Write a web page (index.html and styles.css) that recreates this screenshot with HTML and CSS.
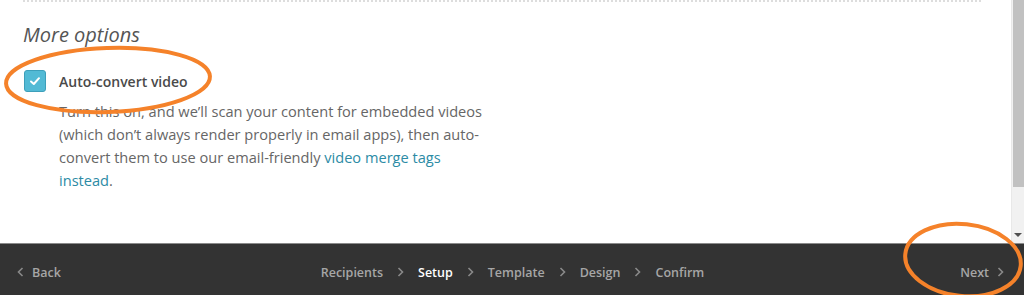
FILE: index.html
```html
<!DOCTYPE html>
<html lang="en">
<head>
  <meta charset="UTF-8">
  <title>Campaign Setup - More options</title>
  <link rel="stylesheet" href="styles.css">
</head>
<body>
  <div class="page">
    <div class="viewport">
      <div class="content">
        <div class="divider"></div>
        <h2 class="section-title">More options</h2>
        <label class="option">
          <span class="checkbox">
            <svg width="14" height="14" viewBox="0 0 14 14"><path d="M3 7.5 L5.8 10 L11 4.2" fill="none" stroke="#fff" stroke-width="2" stroke-linecap="round" stroke-linejoin="round"/></svg>
          </span>
          <span class="option-label">Auto-convert video</span>
        </label>
        <p class="option-help">Turn this on, and we’ll scan your content for embedded videos (which don’t always render properly in email apps), then auto-convert them to use our email-friendly <a href="#">video merge tags instead</a>.</p>
      </div>
      <div class="scrollbar">
        <div class="scroll-thumb"></div>
        <div class="scroll-track"></div>
        <div class="scroll-arrow"></div>
      </div>
    </div>

    <div class="footer">
      <a class="nav-link back" href="#">
        <svg class="chev" width="7" height="10" viewBox="0 0 7 10"><path d="M5.5 1 L1.5 5 L5.5 9" fill="none" stroke="#8a8a8a" stroke-width="1.6"/></svg>
        Back
      </a>
      <ol class="steps">
        <li>Recipients</li>
        <li class="sep"><svg width="7" height="10" viewBox="0 0 7 10"><path d="M1.5 1 L5.5 5 L1.5 9" fill="none" stroke="#8a8a8a" stroke-width="1.6"/></svg></li>
        <li class="current">Setup</li>
        <li class="sep"><svg width="7" height="10" viewBox="0 0 7 10"><path d="M1.5 1 L5.5 5 L1.5 9" fill="none" stroke="#8a8a8a" stroke-width="1.6"/></svg></li>
        <li>Template</li>
        <li class="sep"><svg width="7" height="10" viewBox="0 0 7 10"><path d="M1.5 1 L5.5 5 L1.5 9" fill="none" stroke="#8a8a8a" stroke-width="1.6"/></svg></li>
        <li>Design</li>
        <li class="sep"><svg width="7" height="10" viewBox="0 0 7 10"><path d="M1.5 1 L5.5 5 L1.5 9" fill="none" stroke="#8a8a8a" stroke-width="1.6"/></svg></li>
        <li>Confirm</li>
      </ol>
      <a class="nav-link next" href="#">
        Next
        <svg class="chev" width="7" height="10" viewBox="0 0 7 10"><path d="M1.5 1 L5.5 5 L1.5 9" fill="none" stroke="#8a8a8a" stroke-width="1.6"/></svg>
      </a>
    </div>

    <svg class="mark mark-option" width="214" height="74" viewBox="0 0 214 74">
      <ellipse cx="107" cy="37" rx="102" ry="32" fill="none" stroke="#f5822a" stroke-width="4" transform="rotate(-2 107 37)"/>
    </svg>
    <svg class="mark mark-next" width="124" height="80" viewBox="0 0 124 80">
      <ellipse cx="61" cy="39" rx="58" ry="36" fill="none" stroke="#f5822a" stroke-width="4" transform="rotate(6 61 39)"/>
    </svg>
  </div>
</body>
</html>
```

FILE: styles.css
```css
body {
  margin: 0;
  font-family: 'Open Sans', 'Liberation Sans', sans-serif;
  color: #555;
  background-color: #fff;
}

.page {
  position: relative;
  height: 295px;
  display: flex;
  flex-direction: column;
  overflow: hidden;
}

.viewport {
  flex: 1;
  display: flex;
}

.content {
  flex: 1;
  padding: 0 30px 0 23px;
}

.divider {
  border-top: 2px dotted #ddd;
}

.section-title {
  margin: 19px 0 0;
  font-size: 20px;
  font-style: italic;
  font-weight: 400;
  color: #555;
  line-height: 28px;
}

.option {
  display: flex;
  align-items: center;
  gap: 13px;
  margin-top: 21px;
  margin-left: 1px;
}

.checkbox {
  width: 20px;
  height: 20px;
  border: 1px solid #3d9fba;
  border-radius: 3px;
  background-color: #52bad5;
  display: flex;
  align-items: center;
  justify-content: center;
}

.option-label {
  font-size: 14px;
  font-weight: 600;
  color: #4a4a4a;
}

.option-help {
  margin: 8px 0 0 36px;
  max-width: 430px;
  font-size: 14.6px;
  line-height: 23px;
  color: #666;
}

.option-help a {
  color: #2c8ba5;
  text-decoration: none;
}

.scrollbar {
  width: 12px;
  display: flex;
  flex-direction: column;
  background-color: #f1f1f1;
  border-left: 1px solid #e8e8e8;
}

.scroll-thumb {
  height: 187px;
  margin-left: 1px;
  background-color: #c1c1c1;
}

.scroll-track {
  flex: 1;
}

.scroll-arrow {
  align-self: center;
  width: 0;
  height: 0;
  margin-bottom: 6px;
  border-left: 4px solid transparent;
  border-right: 4px solid transparent;
  border-top: 4px solid #505050;
}

.footer {
  border-top: 1px solid #8a8a8a;
  background-color: #333;
  display: flex;
  align-items: center;
  justify-content: space-between;
  padding: 5px 20px 0 17px;
  box-sizing: border-box;
  height: 52px;
  font-size: 12.5px;
  font-weight: 600;
  color: #a6a6a6;
}

.nav-link {
  color: #a6a6a6;
  text-decoration: none;
  display: flex;
  align-items: center;
  gap: 8px;
}

.steps {
  list-style: none;
  margin: 0 0 0 4px;
  padding: 0;
  display: flex;
  align-items: center;
  gap: 14px;
}

.steps .sep {
  display: flex;
}

.steps .current {
  color: #fff;
}

.mark {
  position: absolute;
}

.mark-option {
  left: 1px;
  top: 43px;
}

.mark-next {
  left: 902px;
  top: 221px;
}
```
